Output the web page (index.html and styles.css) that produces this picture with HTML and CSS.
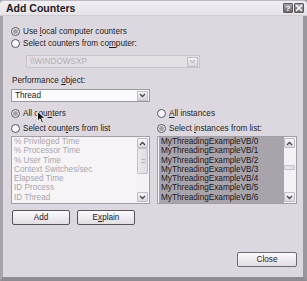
FILE: index.html
```html
<!DOCTYPE html>
<html lang="en">
<head>
    <meta charset="UTF-8">
    <title>Add Counters</title>
    <link rel="stylesheet" href="styles.css">
</head>
<body>
    <div class="window">
        <div class="titlebar">
            <span class="title">Add Counters</span>
            <div class="title-btns">
                <span class="tbtn">?</span>
                <span class="tbtn">
                    <svg width="8" height="8" viewBox="0 0 8 8"><path d="M1 1 L7 7 M7 1 L1 7" stroke="#fff" stroke-width="1.6"/></svg>
                </span>
            </div>
        </div>

        <div class="content">
            <div class="radio-row">
                <span class="radio checked"></span>
                <span>Use <u>l</u>ocal computer counters</span>
            </div>
            <div class="radio-row">
                <span class="radio"></span>
                <span>Select counters from co<u>m</u>puter:</span>
            </div>
            <div class="combo combo-disabled">
                <span class="combo-text">\\WINDOWSXP</span>
                <span class="combo-btn"><svg width="7" height="5" viewBox="0 0 7 5"><path d="M1 1 L3.5 3.5 L6 1" fill="none" stroke="#c2bdc4" stroke-width="1.3"/></svg></span>
            </div>

            <div class="field-label"><span>Performance <u>o</u>bject:</span></div>
            <div class="combo combo-object">
                <span class="combo-text">Thread</span>
                <span class="combo-btn"><svg width="7" height="5" viewBox="0 0 7 5"><path d="M1 1 L3.5 3.5 L6 1" fill="none" stroke="#4a4650" stroke-width="1.3"/></svg></span>
            </div>

            <div class="columns">
                <div class="col">
                    <div class="radio-row tall">
                        <span class="radio checked"></span>
                        <span>All cou<u>n</u>ters</span>
                    </div>
                    <div class="radio-row tall">
                        <span class="radio"></span>
                        <span>Select coun<u>t</u>ers from list</span>
                    </div>
                    <div class="listbox">
                        <ul class="items disabled">
                            <li>% Privileged Time</li>
                            <li>% Processor Time</li>
                            <li>% User Time</li>
                            <li>Context Switches/sec</li>
                            <li>Elapsed Time</li>
                            <li>ID Process</li>
                            <li>ID Thread</li>
                        </ul>
                        <div class="scrollbar">
                            <span class="arrow"><svg width="7" height="5" viewBox="0 0 7 5"><path d="M1 4 L3.5 1.5 L6 4" fill="none" stroke="#4a4650" stroke-width="1.3"/></svg></span>
                            <span class="thumb thumb-left"><span class="grip"></span></span>
                            <span class="track"></span>
                            <span class="arrow"><svg width="7" height="5" viewBox="0 0 7 5"><path d="M1 1 L3.5 3.5 L6 1" fill="none" stroke="#4a4650" stroke-width="1.3"/></svg></span>
                        </div>
                    </div>
                    <div class="btn-row">
                        <span class="btn">Add</span>
                        <span class="btn"><span>E<u>x</u>plain</span></span>
                    </div>
                </div>

                <div class="col">
                    <div class="radio-row tall">
                        <span class="radio"></span>
                        <span><u>A</u>ll instances</span>
                    </div>
                    <div class="radio-row tall">
                        <span class="radio checked"></span>
                        <span>Select <u>i</u>nstances from list:</span>
                    </div>
                    <div class="listbox">
                        <ul class="items selected">
                            <li>MyThreadingExampleVB/0</li>
                            <li>MyThreadingExampleVB/1</li>
                            <li>MyThreadingExampleVB/2</li>
                            <li>MyThreadingExampleVB/3</li>
                            <li>MyThreadingExampleVB/4</li>
                            <li>MyThreadingExampleVB/5</li>
                            <li>MyThreadingExampleVB/6</li>
                        </ul>
                        <div class="scrollbar">
                            <span class="arrow"><svg width="7" height="5" viewBox="0 0 7 5"><path d="M1 4 L3.5 1.5 L6 4" fill="none" stroke="#4a4650" stroke-width="1.3"/></svg></span>
                            <span class="track"></span>
                            <span class="thumb thumb-right"></span>
                            <span class="track short"></span>
                            <span class="arrow"><svg width="7" height="5" viewBox="0 0 7 5"><path d="M1 1 L3.5 3.5 L6 1" fill="none" stroke="#4a4650" stroke-width="1.3"/></svg></span>
                        </div>
                    </div>
                </div>
            </div>

            <div class="footer">
                <span class="btn btn-close">Close</span>
            </div>
        </div>

        <svg class="cursor" width="9" height="13" viewBox="0 0 9 13">
            <path d="M0.5 0.5 L0.5 10 L3 7.8 L4.8 12 L6.4 11.3 L4.7 7.3 L8 7.3 Z" fill="#111" stroke="#fff" stroke-width="0.8"/>
        </svg>
    </div>
</body>
</html>
```

FILE: styles.css
```css
* {
    margin: 0;
    padding: 0;
    box-sizing: border-box;
}

body {
    font-family: 'Liberation Sans', Arial, sans-serif;
    font-size: 8.2px;
    color: #1f1d22;
    background: #dcd7de;
}

.window {
    position: relative;
    width: 307px;
    height: 281px;
    display: flex;
    flex-direction: column;
    background: #ddd8df;
    border-left: 3px solid #a7a3aa;
    border-right: 4px solid #9b979e;
    border-bottom: 4px solid #8f8b92;
}

.titlebar {
    height: 16px;
    margin-left: -3px;
    margin-right: -4px;
    display: flex;
    align-items: center;
    justify-content: space-between;
    padding: 0 3px 0 6px;
    background: linear-gradient(#f1eff3, #e6e3e8);
    border-top: 1px solid #bdb9c0;
    border-bottom: 1px solid #cfcbd2;
    border-radius: 4px 4px 0 0;
}

.title {
    font-family: 'Liberation Sans', Arial, sans-serif;
    font-weight: bold;
    font-size: 10.5px;
    color: #222025;
}

.title-btns {
    display: flex;
    gap: 1px;
}

.tbtn {
    width: 10px;
    height: 10px;
    display: flex;
    align-items: center;
    justify-content: center;
    background: linear-gradient(#a9a6ad, #6e6a72);
    border: 1px solid #5c5960;
    border-radius: 1px;
    color: #fff;
    font-weight: bold;
    font-size: 8px;
}

.content {
    flex: 1;
    display: flex;
    flex-direction: column;
    padding: 9px 0 0 8px;
}

.radio-row {
    height: 12px;
    display: flex;
    align-items: center;
    gap: 3px;
}

.radio-row.tall {
    height: 15px;
}

.radio {
    width: 9px;
    height: 9px;
    border-radius: 50%;
    border: 1px solid #58545c;
    background: #f8f7f9;
    display: flex;
    align-items: center;
    justify-content: center;
}

.radio.checked::after {
    content: "";
    width: 5px;
    height: 5px;
    border-radius: 50%;
    background: #a5a1a8;
}

u {
    text-decoration: underline;
    text-underline-offset: 1px;
}

.combo {
    height: 13px;
    display: flex;
    align-items: center;
    justify-content: space-between;
    border: 1px solid #9c98a0;
    background: #fbfafc;
    padding: 0 1px 0 3px;
}

.combo-disabled {
    width: 174px;
    margin: 6px 0 0 15px;
    background: #e3dfe5;
    border-color: #c8c4cb;
    color: #b4afb7;
}

.combo-object {
    width: 139px;
    margin-top: 3px;
}

.combo-btn {
    width: 11px;
    height: 10px;
    display: flex;
    align-items: center;
    justify-content: center;
    background: linear-gradient(#f4f2f5, #d9d5db);
    border: 1px solid #c2bec5;
}

.field-label {
    height: 12px;
    margin-top: 6px;
    display: flex;
    align-items: center;
    padding-left: 1px;
}

.columns {
    display: grid;
    grid-template-columns: 139px 140px;
    gap: 7px;
    margin-top: 4px;
}

.col {
    display: flex;
    flex-direction: column;
}

.listbox {
    height: 68px;
    display: flex;
    border: 1px solid #a29ea5;
    background: #f6f4f7;
}

.items {
    flex: 1;
    list-style: none;
    padding: 0 1px 0 2px;
    overflow: hidden;
}

.items li {
    height: 9.3px;
    line-height: 9.3px;
    white-space: nowrap;
}

.items.disabled {
    color: #aaa5ad;
}

.items.selected {
    margin: 0 0 0 1px;
    padding: 0 0 0 2px;
    background: #a9a4ac;
    color: #1a181c;
}

.scrollbar {
    width: 12px;
    display: flex;
    flex-direction: column;
    padding: 1px 1px 1px 0;
}

.arrow {
    height: 10px;
    display: flex;
    align-items: center;
    justify-content: center;
    background: linear-gradient(#f7f6f8, #dcd8de);
    border: 1px solid #bfbbc2;
    border-radius: 1px;
}

.track {
    flex: 1;
    background: #f4f2f5;
}

.track.short {
    flex: 0 0 22px;
}

.thumb {
    background: linear-gradient(90deg, #ece9ee, #dedae0);
    border: 1px solid #c4c0c7;
    border-radius: 1px;
    display: flex;
    align-items: center;
    justify-content: center;
}

.thumb-left {
    height: 26px;
}

.thumb-right {
    height: 5px;
}

.grip {
    width: 4px;
    height: 4px;
    border-top: 1px solid #b9b5bc;
    border-bottom: 1px solid #b9b5bc;
}

.btn-row {
    display: flex;
    gap: 7px;
    margin-top: 6px;
    padding-left: 1px;
}

.btn {
    width: 58px;
    height: 15px;
    display: flex;
    align-items: center;
    justify-content: center;
    background: linear-gradient(#fbfafc, #e2dee4);
    border: 1px solid #55525a;
    border-radius: 2px;
    color: #1f1d22;
}

.footer {
    margin-top: auto;
    display: flex;
    justify-content: flex-end;
    padding: 0 6px 10px 0;
}

.btn-close {
    width: 60px;
    border-color: #6e6b72;
}

.cursor {
    position: absolute;
    left: 34px;
    top: 111px;
}
```
